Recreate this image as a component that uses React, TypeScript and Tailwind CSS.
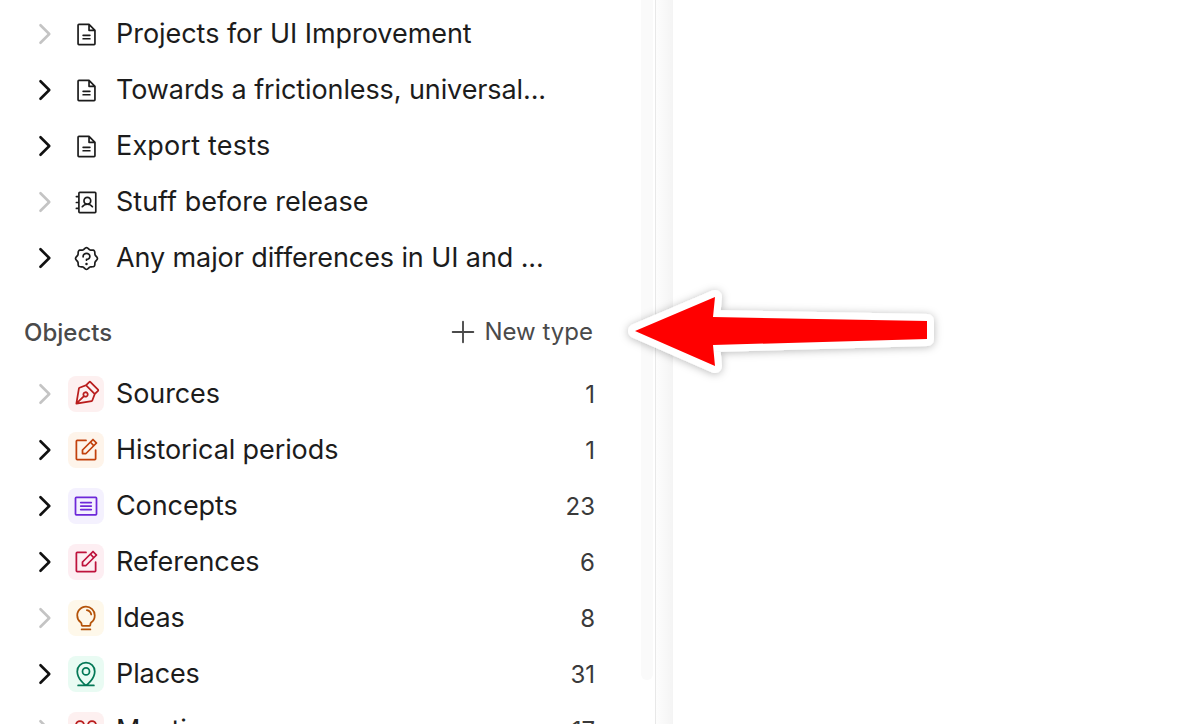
import {
  PiAddressBook,
  PiArticle,
  PiCaretRightBold,
  PiFileText,
  PiLightbulb,
  PiMapPinLine,
  PiNotePencil,
  PiPenNib,
  PiPlus,
  PiSealQuestion,
} from "react-icons/pi";
import type { IconType } from "react-icons";

const Chevron: React.FC<{ muted?: boolean }> = ({ muted }) => (
  <div className={`flex w-[24px] shrink-0 justify-center ${muted ? "text-[#c4c4c4]" : "text-[#111111]"}`}>
    <PiCaretRightBold size={28} className="shrink-0" />
  </div>
);

// only the top of this icon shows above the fold
const MeetingIcon: IconType = ({ size, className }) => (
  <svg width={size} height={size} viewBox="0 0 28 28" fill="none" stroke="currentColor" strokeWidth="1.75" className={className}>
    <circle cx="8" cy="9" r="4" />
    <circle cx="20" cy="9" r="4" />
    <path d="M2 22c1-4 3.500-6 6-6s4 1 6 3c2-2 3.500-3 6-3s5 2 6 6" />
  </svg>
);

const pages: { name: string; icon: IconType; muted?: boolean; text: string }[] = [
  { name: "Projects for UI Improvement", icon: PiFileText, muted: true, text: "tracking-[-0.04px]" },
  { name: "Towards a frictionless, universal...", icon: PiFileText, text: "tracking-[-0.1px]" },
  { name: "Export tests", icon: PiFileText, text: "tracking-[0.2px]" },
  { name: "Stuff before release", icon: PiAddressBook, muted: true, text: "tracking-normal" },
  { name: "Any major differences in UI and ...", icon: PiSealQuestion, text: "tracking-[-0.1px]" },
];

const objects: {
  name: string;
  count: number;
  icon: IconType;
  box: string;
  tone: string;
  muted?: boolean;
}[] = [
  { name: "Sources", count: 1, icon: PiPenNib, box: "bg-[#fdf0f0]", tone: "text-[#b91c1c]", muted: true },
  { name: "Historical periods", count: 1, icon: PiNotePencil, box: "bg-[#fef4ea]", tone: "text-[#c2410c]" },
  { name: "Concepts", count: 23, icon: PiArticle, box: "bg-[#f4f1fe]", tone: "text-[#6d28d9]" },
  { name: "References", count: 6, icon: PiNotePencil, box: "bg-[#fdeef2]", tone: "text-[#be123c]" },
  { name: "Ideas", count: 8, icon: PiLightbulb, box: "bg-[#fef8ea]", tone: "text-[#b45309]", muted: true },
  { name: "Places", count: 31, icon: PiMapPinLine, box: "bg-[#e9fbf3]", tone: "text-[#047857]" },
  { name: "Meetings", count: 17, icon: MeetingIcon, box: "bg-[#fdf0f0]", tone: "text-[#b91c1c]", muted: true },
];

export default function App() {
  return (
    <div className="flex h-screen overflow-hidden bg-white font-['Inter',sans-serif] text-[#1c1c1c]">
      <aside className="w-[641px] shrink-0 pt-[6px]">
        {pages.map((page) => (
          <div key={page.name} className="flex h-[56px] items-center pl-[32px]">
            <Chevron muted={page.muted} />
            <div className="ml-[16px] flex w-[28px] justify-center">
              <page.icon size={27} className="text-[#1c1c1c]" />
            </div>
            <span className={`ml-[16px] text-[27px] leading-[40px] ${page.text}`}>{page.name}</span>
          </div>
        ))}

        <div className="mt-[28px] flex h-[36px] items-center justify-between pl-[24px] pr-[48px]">
          <span className="pt-[2px] text-[24px] font-medium text-[#4a4a4a]">Objects</span>
          <div className="flex items-center gap-[6px] text-[#4a4a4a]">
            <PiPlus size={30} />
            <span className="text-[24px]">New type</span>
          </div>
        </div>

        <div className="mt-[16px]">
          {objects.map((item) => (
            <div key={item.name} className="flex h-[56px] items-center pl-[32px] pr-[46px]">
              <Chevron muted={item.muted} />
              <div className={`ml-[12px] flex h-[36px] w-[36px] items-center justify-center rounded-[8px] ${item.box}`}>
                <item.icon size={28} className={item.tone} />
              </div>
              <span className="ml-[12px] flex-1 text-[27px] leading-[40px] tracking-[-0.1px]">{item.name}</span>
              <span className="pt-[2px] text-[24px] text-[#3a3a3a]">{item.count}</span>
            </div>
          ))}
        </div>
      </aside>

      <div className="h-full w-[14px] shrink-0">
        <div className="h-[680px] w-[12px] rounded-b-[6px] bg-[#fafafa]" />
      </div>
      <div className="h-full w-[18px] shrink-0 border-l border-[#e8e8e8] bg-gradient-to-r from-[#fdfdfd] to-[#f4f4f4]" />
      <main className="flex-1 bg-white" />

      <svg className="absolute left-[610px] top-[275px] h-[110px] w-[345px]" viewBox="610 275 345 110">
        <defs>
          <filter id="arrow-shadow" x="-10%" y="-30%" width="120%" height="160%">
            <feDropShadow dx="0" dy="1" stdDeviation="4" floodColor="#000000" floodOpacity="0.28" />
          </filter>
        </defs>
        <polygon
          points="635,331 715,297 713,317 927,321 927,339 713,345 715,366"
          fill="#ff0000"
          stroke="#ffffff"
          strokeWidth="14"
          strokeLinejoin="round"
          filter="url(#arrow-shadow)"
        />
        <polygon points="635,331 715,297 713,317 927,321 927,339 713,345 715,366" fill="#ff0000" />
      </svg>
    </div>
  );
}
